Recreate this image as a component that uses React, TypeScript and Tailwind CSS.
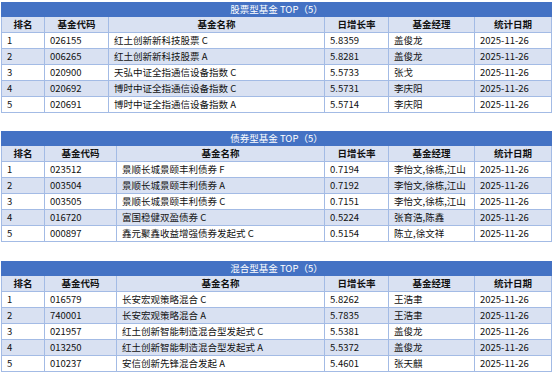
import React from 'react'

type Row = [string, string, string, string, string, string]

interface FundTable {
  title: string
  codeWidth: string
  nameWidth: string
  gap: string
  rows: Row[]
}

const TABLES: FundTable[] = [
  {
    title: '股票型基金 TOP（5）',
    codeWidth: 'w-[64px]',
    nameWidth: 'w-[216px]',
    gap: 'mt-[2px]',
    rows: [
      ['1', '026155', '红土创新新科技股票 C', '5.8359', '盖俊龙', '2025-11-26'],
      ['2', '006265', '红土创新新科技股票 A', '5.8281', '盖俊龙', '2025-11-26'],
      ['3', '020900', '天弘中证全指通信设备指数 C', '5.5733', '张戈', '2025-11-26'],
      ['4', '020692', '博时中证全指通信设备指数 C', '5.5731', '李庆阳', '2025-11-26'],
      ['5', '020691', '博时中证全指通信设备指数 A', '5.5714', '李庆阳', '2025-11-26'],
    ],
  },
  {
    title: '债券型基金 TOP（5）',
    codeWidth: 'w-[72px]',
    nameWidth: 'w-[208px]',
    gap: 'mt-[18px]',
    rows: [
      ['1', '023512', '景顺长城景颐丰利债券 F', '0.7194', '李怡文,徐栋,江山', '2025-11-26'],
      ['2', '003504', '景顺长城景颐丰利债券 A', '0.7192', '李怡文,徐栋,江山', '2025-11-26'],
      ['3', '003505', '景顺长城景颐丰利债券 C', '0.7151', '李怡文,徐栋,江山', '2025-11-26'],
      ['4', '016720', '富国稳健双盈债券 C', '0.5224', '张育浩,陈鑫', '2025-11-26'],
      ['5', '000897', '鑫元聚鑫收益增强债券发起式 C', '0.5154', '陈立,徐文祥', '2025-11-26'],
    ],
  },
  {
    title: '混合型基金 TOP（5）',
    codeWidth: 'w-[72px]',
    nameWidth: 'w-[208px]',
    gap: 'mt-[19px]',
    rows: [
      ['1', '016579', '长安宏观策略混合 C', '5.8262', '王浩聿', '2025-11-26'],
      ['2', '740001', '长安宏观策略混合 A', '5.7835', '王浩聿', '2025-11-26'],
      ['3', '021957', '红土创新智能制造混合型发起式 C', '5.5381', '盖俊龙', '2025-11-26'],
      ['4', '013250', '红土创新智能制造混合型发起式 A', '5.5372', '盖俊龙', '2025-11-26'],
      ['5', '010237', '安信创新先锋混合发起 A', '5.4601', '张天麒', '2025-11-26'],
    ],
  },
]

const HEADERS = ['排名', '基金代码', '基金名称', '日增长率', '基金经理', '统计日期']

function Table({ table }: { table: FundTable }) {
  const widths = [
    'w-[43px]',
    table.codeWidth,
    table.nameWidth,
    'w-[64px]',
    'w-[86px]',
    'flex-1',
  ]

  return (
    <div className={`w-[551px] ml-[1px] ${table.gap}`}>
      <div className="h-[15px] bg-[#4472c4] text-white flex items-center justify-center leading-none">
        {table.title}
      </div>
      <div className="flex h-[16px] bg-[#d9e1f2] border-b border-[#a3bbe5] font-bold">
        {HEADERS.map((h, i) => (
          <div
            key={h}
            className={`${widths[i]} flex items-center justify-center border-l border-[#a3bbe5] last:border-r`}
          >
            {h}
          </div>
        ))}
      </div>
      {table.rows.map((row, r) => (
        <div
          key={r}
          className={`flex h-[16px] border-b border-[#a3bbe5] ${
            r % 2 === 1 ? 'bg-[#d9e1f2]' : 'bg-white'
          }`}
        >
          {row.map((cell, i) => (
            <div
              key={i}
              className={`${widths[i]} flex items-center pl-[5px] whitespace-nowrap border-l border-[#a3bbe5] last:border-r`}
            >
              {cell}
            </div>
          ))}
        </div>
      ))}
    </div>
  )
}

export default function App() {
  return (
    <div
      className="w-[554px] h-[376px] bg-white flex flex-col text-[9.5px] text-[#111111] overflow-hidden"
      style={{ fontFamily: '"Noto Sans CJK SC", "Noto Sans", sans-serif' }}
    >
      {TABLES.map((t) => (
        <Table key={t.title} table={t} />
      ))}
    </div>
  )
}
